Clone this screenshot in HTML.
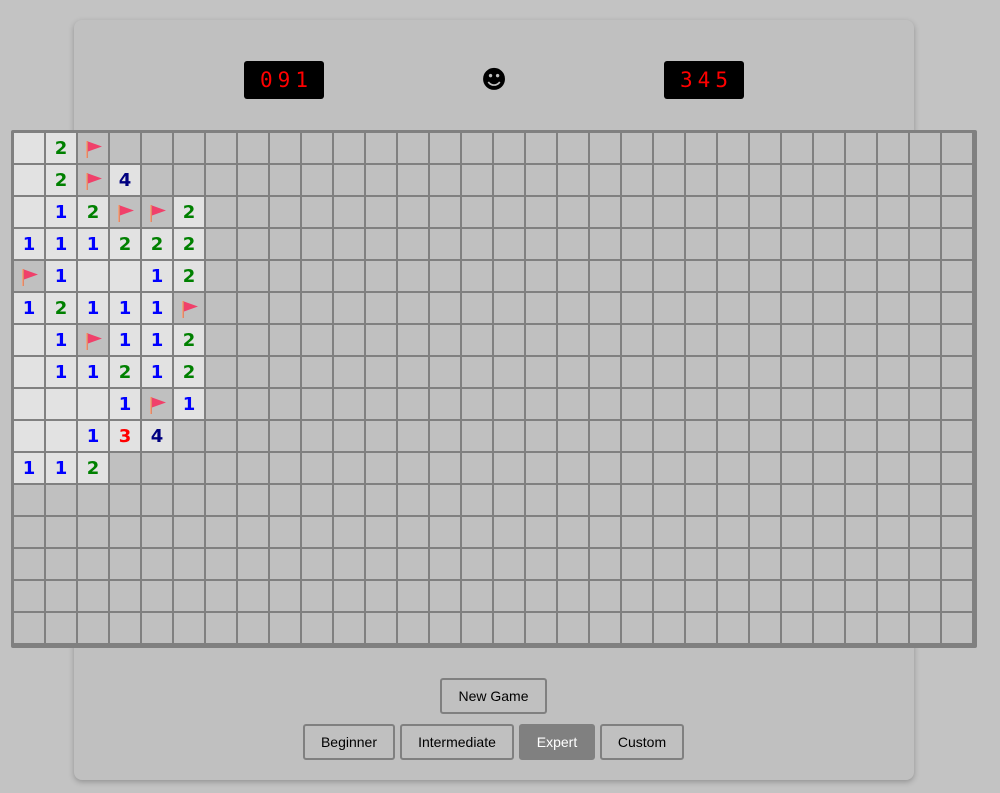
<!DOCTYPE html>
<html><head><style>
body{margin:0;background:#c3c3c3;width:1000px;height:793px;overflow:hidden;font-family:"Liberation Sans",Arial,sans-serif;position:relative}
.panel{position:absolute;left:74px;top:20px;width:840px;height:760px;background:#c0c0c0;border-radius:8px;box-shadow:0 2px 6px rgba(0,0,0,.25)}
.cnt{position:absolute;top:61px;width:80px;height:38px;background:#000;border-radius:3px;color:#f00;font-family:"DejaVu Sans Mono","Liberation Mono",monospace;font-size:21px;line-height:38px;text-align:center;letter-spacing:5px;text-indent:5px}
.smile{position:absolute;left:481px;top:65px;font-size:25px;line-height:30px;font-family:"DejaVu Sans",sans-serif}
.gridwrap{position:absolute;left:11px;top:130px;width:966px;height:518px;background:#808080;border-radius:2px}
.grid{position:absolute;left:3px;top:3px;width:960px;height:512px;background-color:#c0c0c0;background-image:linear-gradient(to right,transparent 30px,#808080 30px),linear-gradient(to bottom,transparent 30px,#808080 30px);background-size:32px 32px;display:grid;grid-template-columns:repeat(30,30px);grid-template-rows:repeat(16,30px);gap:2px}
.grid div{background:#e2e2e2;font-family:"DejaVu Sans",sans-serif;font-weight:bold;font-size:18px;line-height:32px;text-align:center}
.grid div.f{background:#c0c0c0}
.grid svg{display:block}
.n1{color:#0000ff}.n2{color:#008000}.n3{color:#ff0000}.n4{color:#000080}
.btn{position:absolute;height:32px;border:2px solid #808080;border-radius:3px;background:#c0c0c0;font-size:14px;line-height:32px;text-align:center;color:#000;box-sizing:content-box}
</style></head><body>
<svg width="0" height="0" style="position:absolute"><defs><linearGradient id="p" x1="0" x2="1"><stop offset="0" stop-color="#f4b090"/><stop offset="1" stop-color="#d87a5a"/></linearGradient></defs></svg>
<div class="panel"></div>
<div class="cnt" style="left:244px">091</div>
<div class="smile">☻</div>
<div class="cnt" style="left:664px">345</div>
<div class="gridwrap"><div class="grid">
<div style="grid-area:1/1"></div><div class="n2" style="grid-area:1/2">2</div><div class="f" style="grid-area:1/3"><svg width="30" height="30"><rect x="8" y="8" width="2" height="17" fill="url(#p)"/><polygon points="10,8.5 24,13.5 10,18.5" fill="#f0406a"/></svg></div>
<div style="grid-area:2/1"></div><div class="n2" style="grid-area:2/2">2</div><div class="f" style="grid-area:2/3"><svg width="30" height="30"><rect x="8" y="8" width="2" height="17" fill="url(#p)"/><polygon points="10,8.5 24,13.5 10,18.5" fill="#f0406a"/></svg></div><div class="n4" style="grid-area:2/4">4</div>
<div style="grid-area:3/1"></div><div class="n1" style="grid-area:3/2">1</div><div class="n2" style="grid-area:3/3">2</div><div class="f" style="grid-area:3/4"><svg width="30" height="30"><rect x="8" y="8" width="2" height="17" fill="url(#p)"/><polygon points="10,8.5 24,13.5 10,18.5" fill="#f0406a"/></svg></div><div class="f" style="grid-area:3/5"><svg width="30" height="30"><rect x="8" y="8" width="2" height="17" fill="url(#p)"/><polygon points="10,8.5 24,13.5 10,18.5" fill="#f0406a"/></svg></div><div class="n2" style="grid-area:3/6">2</div>
<div class="n1" style="grid-area:4/1">1</div><div class="n1" style="grid-area:4/2">1</div><div class="n1" style="grid-area:4/3">1</div><div class="n2" style="grid-area:4/4">2</div><div class="n2" style="grid-area:4/5">2</div><div class="n2" style="grid-area:4/6">2</div>
<div class="f" style="grid-area:5/1"><svg width="30" height="30"><rect x="8" y="8" width="2" height="17" fill="url(#p)"/><polygon points="10,8.5 24,13.5 10,18.5" fill="#f0406a"/></svg></div><div class="n1" style="grid-area:5/2">1</div><div style="grid-area:5/3"></div><div style="grid-area:5/4"></div><div class="n1" style="grid-area:5/5">1</div><div class="n2" style="grid-area:5/6">2</div>
<div class="n1" style="grid-area:6/1">1</div><div class="n2" style="grid-area:6/2">2</div><div class="n1" style="grid-area:6/3">1</div><div class="n1" style="grid-area:6/4">1</div><div class="n1" style="grid-area:6/5">1</div><div class="f" style="grid-area:6/6"><svg width="30" height="30"><rect x="8" y="8" width="2" height="17" fill="url(#p)"/><polygon points="10,8.5 24,13.5 10,18.5" fill="#f0406a"/></svg></div>
<div style="grid-area:7/1"></div><div class="n1" style="grid-area:7/2">1</div><div class="f" style="grid-area:7/3"><svg width="30" height="30"><rect x="8" y="8" width="2" height="17" fill="url(#p)"/><polygon points="10,8.5 24,13.5 10,18.5" fill="#f0406a"/></svg></div><div class="n1" style="grid-area:7/4">1</div><div class="n1" style="grid-area:7/5">1</div><div class="n2" style="grid-area:7/6">2</div>
<div style="grid-area:8/1"></div><div class="n1" style="grid-area:8/2">1</div><div class="n1" style="grid-area:8/3">1</div><div class="n2" style="grid-area:8/4">2</div><div class="n1" style="grid-area:8/5">1</div><div class="n2" style="grid-area:8/6">2</div>
<div style="grid-area:9/1"></div><div style="grid-area:9/2"></div><div style="grid-area:9/3"></div><div class="n1" style="grid-area:9/4">1</div><div class="f" style="grid-area:9/5"><svg width="30" height="30"><rect x="8" y="8" width="2" height="17" fill="url(#p)"/><polygon points="10,8.5 24,13.5 10,18.5" fill="#f0406a"/></svg></div><div class="n1" style="grid-area:9/6">1</div>
<div style="grid-area:10/1"></div><div style="grid-area:10/2"></div><div class="n1" style="grid-area:10/3">1</div><div class="n3" style="grid-area:10/4">3</div><div class="n4" style="grid-area:10/5">4</div>
<div class="n1" style="grid-area:11/1">1</div><div class="n1" style="grid-area:11/2">1</div><div class="n2" style="grid-area:11/3">2</div>
</div></div>
<div class="btn" style="left:440px;top:678px;width:103px">New Game</div>
<div class="btn" style="left:303px;top:724px;width:88px">Beginner</div>
<div class="btn" style="left:400px;top:724px;width:110px">Intermediate</div>
<div class="btn" style="left:519px;top:724px;width:72px;background:#808080;color:#fff">Expert</div>
<div class="btn" style="left:600px;top:724px;width:80px">Custom</div>
</body></html>
